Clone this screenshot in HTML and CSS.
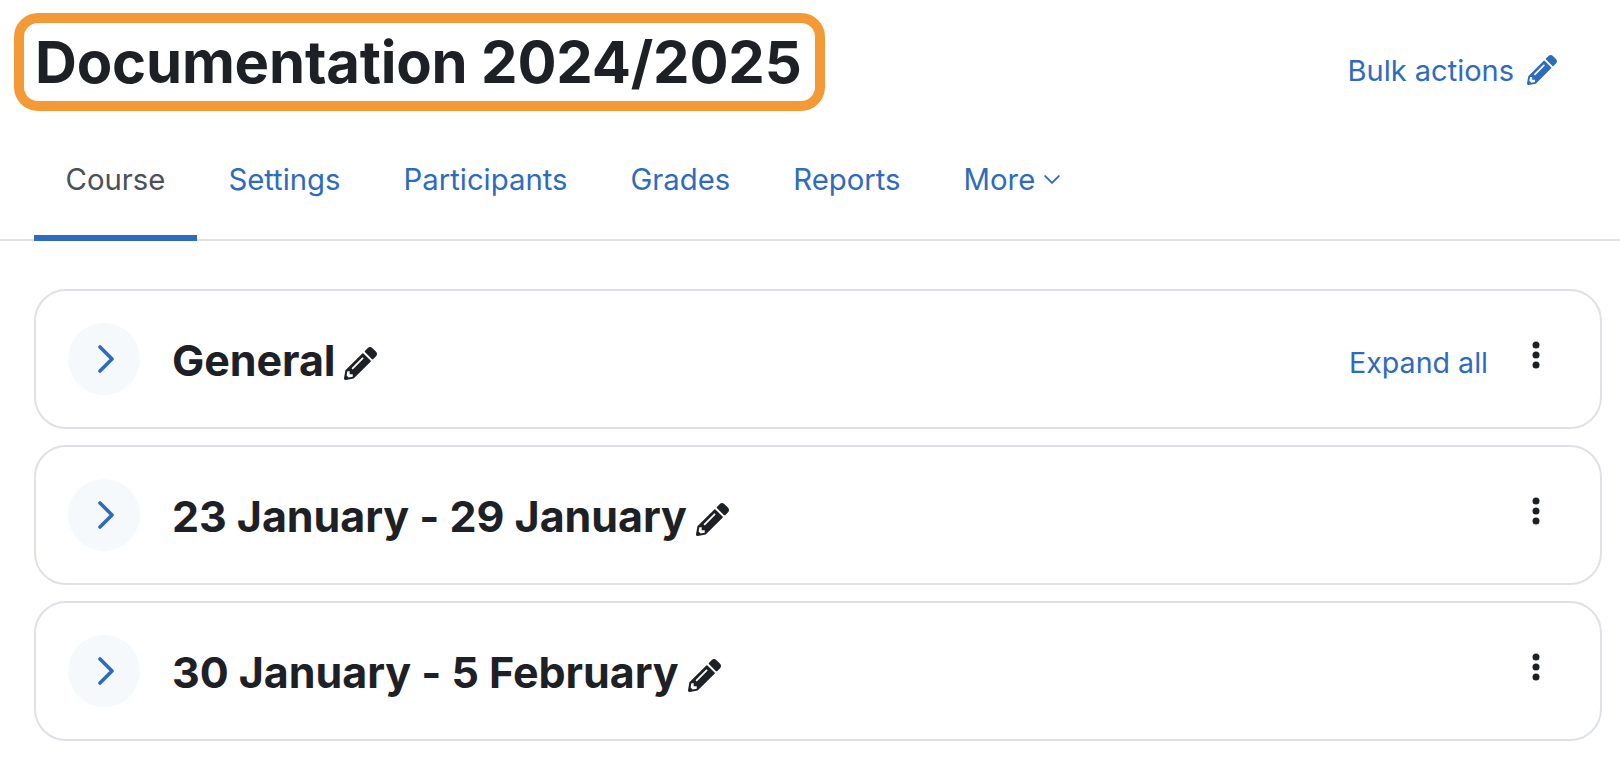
FILE: index.html
```html
<!DOCTYPE html>
<html lang="en">
<head>
  <meta charset="UTF-8" />
  <title>Documentation 2024/2025</title>
  <link rel="stylesheet" href="styles.css">
</head>
<body>

<svg class="icon-defs" width="0" height="0">
  <symbol id="pencil" viewBox="0 0 512 512">
    <path d="M497.9 142.1l-46.1 46.1c-4.7 4.7-12.3 4.7-17 0l-111-111c-4.7-4.7-4.7-12.3 0-17l46.1-46.1c18.7-18.7 49.1-18.7 67.9 0l60.1 60.1c18.8 18.7 18.8 49.1 0 67.9zM284.2 99.8L21.6 362.4.4 483.9c-2.9 16.4 11.4 30.6 27.8 27.8l121.5-21.3 262.6-262.6c4.7-4.7 4.7-12.3 0-17l-111-111c-4.8-4.7-12.4-4.7-17.1 0zM124.1 339.9c-5.5-5.5-5.5-14.3 0-19.8l154-154c5.5-5.5 14.3-5.5 19.8 0s5.5 14.3 0 19.8l-154 154c-5.5 5.5-14.3 5.5-19.8 0zM88 424h48v36.3l-64.5 11.3-31.1-31.1L51.7 376H88v48z"/>
  </symbol>
  <symbol id="chevron" viewBox="0 0 16 28">
    <path d="M2 2l12 12L2 26" fill="none" stroke="currentColor" stroke-width="3.6" stroke-linecap="round" stroke-linejoin="round"/>
  </symbol>
  <symbol id="kebab" viewBox="0 0 8 28">
    <circle cx="4" cy="4" r="3.5"/>
    <circle cx="4" cy="14" r="3.5"/>
    <circle cx="4" cy="24" r="3.5"/>
  </symbol>
</svg>

<header class="page-head">
  <h1 class="course-title">Documentation 2024/2025</h1>
  <a class="bulk-link" href="#">Bulk actions <svg class="pencil-blue"><use href="#pencil"/></svg></a>
</header>

<nav class="tabs">
  <a class="tab active" href="#">Course</a>
  <a class="tab" href="#">Settings</a>
  <a class="tab" href="#">Participants</a>
  <a class="tab" href="#">Grades</a>
  <a class="tab" href="#">Reports</a>
  <a class="tab" href="#">More <svg class="caret" viewBox="0 0 14 8"><path d="M1 1l6 6 6-6" fill="none" stroke="currentColor" stroke-width="1.7" stroke-linecap="round" stroke-linejoin="round"/></svg></a>
</nav>

<section class="sections">
  <div class="card">
    <span class="toggle"><svg class="chevron"><use href="#chevron"/></svg></span>
    <h2 class="section-name">General <svg class="pencil"><use href="#pencil"/></svg></h2>
    <a class="expand-all" href="#">Expand all</a>
    <svg class="kebab"><use href="#kebab"/></svg>
  </div>
  <div class="card">
    <span class="toggle"><svg class="chevron"><use href="#chevron"/></svg></span>
    <h2 class="section-name">23 January - 29 January <svg class="pencil"><use href="#pencil"/></svg></h2>
    <svg class="kebab"><use href="#kebab"/></svg>
  </div>
  <div class="card">
    <span class="toggle"><svg class="chevron"><use href="#chevron"/></svg></span>
    <h2 class="section-name">30 January - 5 February <svg class="pencil"><use href="#pencil"/></svg></h2>
    <svg class="kebab"><use href="#kebab"/></svg>
  </div>
</section>

</body>
</html>
```

FILE: styles.css
```css
body {
  font-family: Inter, "Liberation Sans", sans-serif;
  background-color: #fff;
  color: #1d2125;
  margin: 0;
  height: 757px;
  overflow: hidden;
}
a {
  color: #2f6bbd;
  text-decoration: none;
}
.icon-defs {
  display: block;
}
.page-head {
  display: flex;
  align-items: center;
  justify-content: space-between;
  padding: 13px 63px 0 14px;
}
.course-title {
  margin: 0;
  box-sizing: border-box;
  width: 811px;
  height: 98px;
  padding: 0 11px;
  border: 10px solid #f39a36;
  border-radius: 24px;
  font-size: 58px;
  font-weight: 700;
  letter-spacing: -0.2px;
  line-height: 78px;
  white-space: nowrap;
}
.bulk-link {
  display: flex;
  align-items: center;
  gap: 13px;
  font-size: 29px;
  margin-top: 16px;
}
.pencil-blue {
  width: 30px;
  height: 30px;
  fill: #2f6bbd;
}
.tabs {
  display: flex;
  height: 129px;
  margin-top: 1px;
  padding-left: 34px;
  border-bottom: 2px solid #dee2e6;
  box-sizing: border-box;
}
.tab {
  display: flex;
  align-items: center;
  gap: 9px;
  padding: 11px 31.5px 0;
  font-size: 29.3px;
  height: 129px;
  box-sizing: border-box;
  border-bottom: 6px solid transparent;
}
.tab.active {
  color: #495057;
  border-bottom-color: #2f6bbd;
}
.caret {
  width: 16px;
  height: 9px;
}
.sections {
  display: flex;
  flex-direction: column;
  gap: 16px;
  padding: 48px 18px 0 34px;
}
.card {
  display: flex;
  align-items: flex-start;
  box-sizing: border-box;
  height: 140px;
  padding: 32px 60px 0 32px;
  border: 2px solid #dee2e6;
  border-radius: 32px;
}
.toggle {
  display: flex;
  align-items: center;
  justify-content: center;
  flex: none;
  width: 72px;
  height: 72px;
  border-radius: 50%;
  background-color: #f5f9fc;
  color: #2f6bbd;
}
.chevron {
  width: 16px;
  height: 28px;
  margin-left: 4px;
}
.section-name {
  display: flex;
  align-items: center;
  gap: 9px;
  flex: 1;
  margin: 5px 0 0 32px;
  font-size: 43px;
  font-weight: 700;
  letter-spacing: -0.05px;
  line-height: 64px;
}
.pencil {
  width: 33px;
  height: 33px;
  fill: #1d2125;
  margin-top: 6px;
}
.expand-all {
  font-size: 28.6px;
  line-height: 40px;
  margin: 20px 44px 0 0;
}
.kebab {
  width: 8px;
  height: 28px;
  fill: #1d2125;
  margin-top: 18px;
}
```
